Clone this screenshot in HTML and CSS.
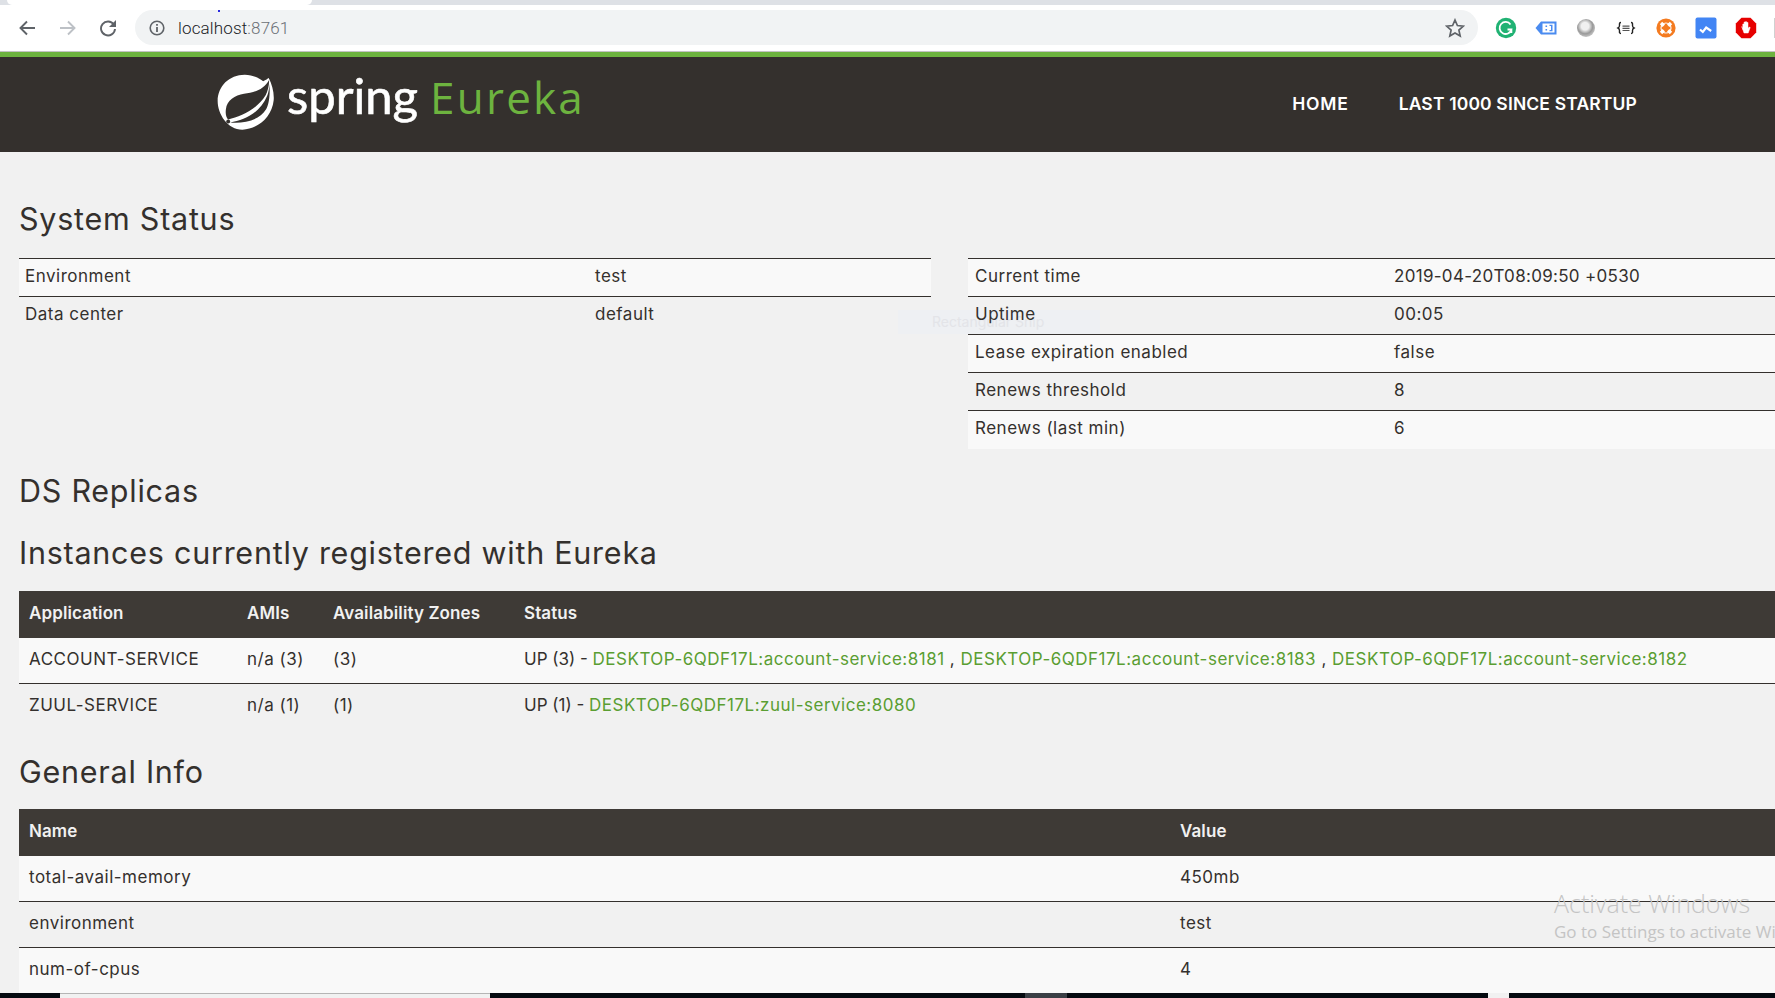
FILE: index.html
```html
<!DOCTYPE html>
<html lang="en">
<head>
    <meta charset="UTF-8">
    <meta name="viewport" content="width=device-width, initial-scale=1.0">
    <title>Eureka</title>
    <link rel="stylesheet" href="styles.css">
</head>
<body>
    <!-- Browser chrome -->
    <div class="tabstrip"><div class="tab"></div></div>
    <div class="toolbar">
        <svg class="nav-icon" viewBox="0 0 18 18"><path d="M17 9H2.500M9 2.500L2.500 9 9 15.500" fill="none" stroke="#5f6368" stroke-width="1.900"/></svg>
        <svg class="nav-icon" viewBox="0 0 18 18"><path d="M1 9h14.500M9 2.500L15.500 9 9 15.500" fill="none" stroke="#bdc1c6" stroke-width="1.900"/></svg>
        <svg class="nav-icon" viewBox="0 0 18 18"><path d="M14.800 5.500A7 7 0 1 0 16 10" fill="none" stroke="#5f6368" stroke-width="1.900"/><path d="M17 1v7h-7z" fill="#5f6368"/></svg>
        <div class="omnibox">
            <svg class="info-icon" viewBox="0 0 16 16"><circle cx="8" cy="8" r="6.800" fill="none" stroke="#5f6368" stroke-width="1.600"/><path d="M7.100 7h1.800v5H7.100zM7.100 4h1.800v1.800H7.100z" fill="#5f6368"/></svg>
            <span class="url">localhost<span class="url-port">:8761</span></span>
            <svg class="star-icon" viewBox="0 0 20 20"><path d="M10 2l2.400 5.500 6 .6-4.500 4 1.300 5.900L10 15l-5.200 3 1.300-5.900-4.500-4 6-.6z" fill="none" stroke="#5f6368" stroke-width="1.700"/></svg>
        </div>
        <div class="extensions">
            <svg class="ext" viewBox="0 0 22 22"><circle cx="11" cy="11" r="10.200" fill="#20b273"/><path d="M15.500 7.500A6 6 0 1 0 16.400 12.500H12.500M16.400 12.500v3.500" fill="none" stroke="#fff" stroke-width="1.800"/></svg>
            <svg class="ext" viewBox="0 0 22 22"><path d="M0.500 11L6 4.500h15.500v13H6z" fill="#4a8bf0"/><path d="M7.500 6.500h12v9h-12z" fill="#fff"/><path d="M10.500 8.500h1.600v1.600h-1.600zM10.500 12h1.600v1.600h-1.600zM14.500 7.800h3v6.500h-3v-1.200h1.500V9h-1.500z" fill="#4a8bf0"/></svg>
            <svg class="ext" viewBox="0 0 22 22">
                <defs><radialGradient id="ring" cx="0.450" cy="0.400" r="0.600"><stop offset="0.350" stop-color="#f0f0f0"/><stop offset="0.700" stop-color="#9a9a9a"/><stop offset="1" stop-color="#c4c4c4"/></radialGradient></defs>
                <circle cx="11" cy="11" r="9" fill="url(#ring)"/>
            </svg>
            <svg class="ext" viewBox="0 0 22 22"><path d="M6 5.500c-2 0-1.500 1.500-1.500 3 0 1.500-.5 2-1.500 2.500 1 .5 1.500 1 1.500 2.500s-.5 3 1.500 3M16 5.500c2 0 1.500 1.500 1.500 3 0 1.500.5 2 1.500 2.500-1 .5-1.500 1-1.500 2.500s.5 3-1.500 3" fill="none" stroke="#222" stroke-width="1.400"/><path d="M7.500 8.500h7v1.300h-7zM7.500 10.700h7V12h-7zM7.500 12.900h7v1.100h-7z" fill="#555"/></svg>
            <svg class="ext" viewBox="0 0 22 22"><circle cx="11" cy="11" r="9.600" fill="#f47b20"/><circle cx="11" cy="11" r="5" fill="none" stroke="#fff" stroke-width="1.100"/><path d="M6 6l2.800 2.800M16 6l-2.800 2.800M6 16l2.800-2.800M16 16l-2.800-2.800" stroke="#fff" stroke-width="3.400"/></svg>
            <svg class="ext" viewBox="0 0 22 22"><rect x="0.500" y="0.500" width="21" height="21" rx="2" fill="#4285f4"/><path d="M5 12.500l2.800 2.500 3.400-4.500 5 3.500" fill="none" stroke="#fff" stroke-width="2.200"/></svg>
            <svg class="ext" viewBox="0 0 22 22"><path d="M6.500 0.800h9l5.700 5.700v9l-5.700 5.700h-9L0.800 15.500v-9z" fill="#e60000"/><path d="M6.800 9.500l1 3V7h1.300v3.500V5h1.300v5.500V4.700h1.300v5.800V5.500h1.300v6l1.200-1.500 1 .5-2 5.500H9z" fill="#fff" stroke="#fff" stroke-width=".5"/></svg>
            <div class="ext-sep"></div>
        </div>
    </div>

    <!-- Navbar -->
    <header class="navbar">
        <div class="brand">
            <svg class="leaf" viewBox="38 27 176 172">
                <path d="M122 30C150 30 172 44 178 50C186 46 192 42 195 40C205 60 212 85 210 108C205 160 160 196 115 197C70 197 40 150 40 110C40 65 75 30 122 30Z" fill="#fff"/>
                <path d="M196 46C180 75 150 85 120 88C92 92 68 108 65 135C63 150 66 160 72 166C110 158 160 135 186 92C192 80 197 60 196 46Z" fill="#34302d"/>
                <path d="M190 95C170 145 120 170 78 175C115 178 165 172 187 135C198 115 199 80 197 58C197 70 194 85 190 95Z" fill="#34302d"/>
                <circle cx="72" cy="172" r="6" fill="#34302d"/>
            </svg>
            <div class="brand-text">
                <span class="brand-spring">spring</span>
                <span class="brand-eureka">Eureka</span>
            </div>
        </div>
        <nav class="nav-links">
            <a class="nav-home" href="#">HOME</a>
            <a href="#">LAST 1000 SINCE STARTUP</a>
        </nav>
    </header>

    <main class="content">
        <h2 class="first">System Status</h2>
        <div class="status-row">
            <table class="table status-left">
                <tr><td class="env-name">Environment</td><td>test</td></tr>
                <tr><td>Data center</td><td>default</td></tr>
            </table>
            <table class="table status-right">
                <tr><td class="time-name">Current time</td><td class="time-value">2019-04-20T08:09:50 +0530</td></tr>
                <tr><td>Uptime</td><td>00:05</td></tr>
                <tr><td>Lease expiration enabled</td><td>false</td></tr>
                <tr><td>Renews threshold</td><td>8</td></tr>
                <tr><td>Renews (last min)</td><td>6</td></tr>
            </table>
        </div>

        <h2>DS Replicas</h2>
        <h2 class="tight">Instances currently registered with Eureka</h2>
        <table class="table data">
            <tr><th class="col-app">Application</th><th class="col-ami">AMIs</th><th class="col-zone">Availability Zones</th><th>Status</th></tr>
            <tr>
                <td>ACCOUNT-SERVICE</td><td>n/a (3)</td><td>(3)</td>
                <td><span class="up">UP (3) - </span><a href="#">DESKTOP-6QDF17L:account-service:8181</a> , <a href="#">DESKTOP-6QDF17L:account-service:8183</a> , <a href="#">DESKTOP-6QDF17L:account-service:8182</a></td>
            </tr>
            <tr>
                <td>ZUUL-SERVICE</td><td>n/a (1)</td><td>(1)</td>
                <td><span class="up">UP (1) - </span><a href="#">DESKTOP-6QDF17L:zuul-service:8080</a></td>
            </tr>
        </table>

        <h2 class="info">General Info</h2>
        <table class="table data">
            <tr><th class="col-name">Name</th><th>Value</th></tr>
            <tr><td>total-avail-memory</td><td>450mb</td></tr>
            <tr><td>environment</td><td>test</td></tr>
            <tr><td>num-of-cpus</td><td>4</td></tr>
        </table>
    </main>

    <!-- Things lying over the page -->
    <div class="snip">Rectangular Snip</div>
    <div class="activate">
        <div class="activate-title">Activate Windows</div>
        <div class="activate-sub">Go to Settings to activate Windows.</div>
    </div>
    <div class="taskbar">
        <div class="bar-gap bar-a"></div>
        <div class="bar-gap bar-b"></div>
        <div class="bar-gap bar-c"></div>
    </div>
</body>
</html>
```

FILE: styles.css
```css
* {
    margin: 0;
    padding: 0;
    box-sizing: border-box;
}

html, body {
    height: 998px;
    overflow: hidden;
}

body {
    position: relative;
    font-family: Inter, Arial, sans-serif;
    font-size: 17px;
    letter-spacing: 0.5px;
    color: #34302d;
    background-color: #f1f1f1;
}

.tabstrip {
    position: relative;
    height: 5px;
    padding-left: 7px;
    background-color: #dee1e6;
}

.tab {
    width: 305px;
    height: 5px;
    background-color: #fff;
    border-bottom-left-radius: 5px;
    border-bottom-right-radius: 5px;
}

.toolbar {
    position: relative;
    height: 47px;
    padding: 5px 0 6px 18px;
    display: flex;
    align-items: center;
    letter-spacing: 0;
    background-color: #fff;
    border-bottom: 1px solid #c4c4c4;
}

/* stray blue pixel in the capture */
.toolbar::before {
    content: "";
    position: absolute;
    left: 218px;
    top: 5px;
    width: 2px;
    height: 2px;
    background-color: #2a2ae0;
}

.nav-icon {
    width: 18px;
    height: 18px;
    margin-right: 22.500px;
}

.omnibox {
    width: 1343px;
    height: 35px;
    margin-left: -4.500px;
    padding: 0 13px 0 14px;
    display: flex;
    align-items: center;
    background-color: #f1f3f4;
    border-radius: 18px;
}

.info-icon {
    width: 16px;
    height: 16px;
}

.url {
    margin-left: 13px;
    font-family: Roboto, Arial, sans-serif;
    font-size: 17px;
    font-weight: 300;
    letter-spacing: 0.15px;
    color: #202124;
}

.url-port {
    color: #6b7076;
}

.star-icon {
    width: 20px;
    height: 20px;
    margin-left: auto;
}

.extensions {
    flex: 1;
    padding-left: 16.500px;
    display: flex;
    align-items: center;
    gap: 18px;
}

.ext {
    width: 22px;
    height: 22px;
}

.ext-sep {
    width: 1px;
    height: 20px;
    margin-left: -1px;
    background-color: #d0d0d0;
}

.navbar {
    height: 100px;
    padding: 0 138px 0 217px;
    display: flex;
    align-items: center;
    justify-content: space-between;
    letter-spacing: 0;
    background-color: #34302d;
    border-top: 5px solid #6db33f;
}

.brand {
    display: flex;
    align-items: center;
    margin-top: -5px;
}

.leaf {
    width: 58px;
    height: 58px;
    margin-right: 12px;
}

.brand-text {
    display: flex;
    align-items: baseline;
    margin-top: -11px;
}

.brand-spring {
    font-family: "Lato", sans-serif;
    font-size: 49px;
    color: #fff;
    -webkit-text-stroke: 0.6px #fff;
    margin-right: 12px;
}

.brand-eureka {
    font-family: "Open Sans", sans-serif;
    font-size: 44px;
    letter-spacing: 2.200px;
    color: #6db33f;
}

.nav-links {
    display: flex;
    gap: 50px;
    margin-top: -2px;
}

.nav-links a {
    font-family: Inter, Arial, sans-serif;
    font-size: 17.500px;
    font-weight: 600;
    letter-spacing: 0.15px;
    color: #fff;
    text-decoration: none;
}

.nav-links .nav-home {
    letter-spacing: 0.8px;
}

.content {
    padding: 22px 0 0 19px;
}

h2 {
    font-size: 30.500px;
    font-weight: 400;
    letter-spacing: 0.75px;
    line-height: 34px;
    margin: 25px 0 22px;
}

h2.first {
    margin-top: 28px;
}

h2.tight {
    margin: 28px 0 21px;
}

h2.info {
    margin-bottom: 20px;
}

.status-row {
    display: flex;
    gap: 37px;
    align-items: flex-start;
}

.table {
    width: 100%;
    border-collapse: collapse;
}

.table td {
    padding: 0 7px 3px;
    height: 38px;
    border-top: 1px solid #34302d;
}

.table tr:nth-child(odd) {
    background-color: #f9f9f9;
}

.status-left {
    width: 912px;
    flex: none;
}

.status-left td {
    padding-left: 6px;
}

.status-right {
    flex: 1;
}

.env-name {
    width: 570px;
}

.time-name {
    width: 419px;
}

.time-value {
    letter-spacing: 0.3px;
}

.data th {
    height: 47px;
    padding: 0 10px 3px;
    text-align: left;
    font-weight: 600;
    letter-spacing: 0.1px;
    color: #f1f1f1;
    background-color: #3e3a36;
}

.data td {
    height: 46px;
    padding: 0 10px 3px;
}

.data tr:nth-child(2) td {
    border-top: none;
}

.data tr:nth-child(odd) {
    background-color: transparent;
}

.data tr:nth-child(even) {
    background-color: #f9f9f9;
}

.data .up {
    letter-spacing: 0;
}

.data a {
    letter-spacing: 0.5px;
    color: #5a9e32;
    text-decoration: none;
}

.col-app {
    width: 218px;
}

.col-ami {
    width: 86px;
}

.col-zone {
    width: 191px;
}

.col-name {
    width: 1151px;
}

.snip {
    position: absolute;
    z-index: -1;
    left: 898px;
    top: 310px;
    width: 202px;
    height: 24px;
    padding-left: 34px;
    font-size: 14px;
    line-height: 24px;
    letter-spacing: 0;
    color: #e3e4e8;
    background-color: #eef0f3;
}

.activate {
    position: absolute;
    left: 1554px;
    top: 886px;
    white-space: nowrap;
    font-family: "Open Sans", sans-serif;
    letter-spacing: 0;
    color: #c4c4c4;
}

.activate-title {
    font-size: 25px;
    font-weight: 300;
}

.activate-sub {
    font-size: 17px;
}

.taskbar {
    position: absolute;
    left: 0;
    right: 0;
    bottom: 0;
    height: 5px;
    background-color: #050a10;
}

.bar-gap {
    position: absolute;
    top: 0;
    height: 5px;
}

.bar-a {
    left: 60px;
    width: 430px;
    background-color: #f1f1f1;
    border-top: 1px solid #b5b5b5;
}

.bar-b {
    left: 1025px;
    width: 42px;
    background-color: #3a3f45;
}

.bar-c {
    left: 1488px;
    width: 21px;
    background-color: #f1f1f1;
}
```
